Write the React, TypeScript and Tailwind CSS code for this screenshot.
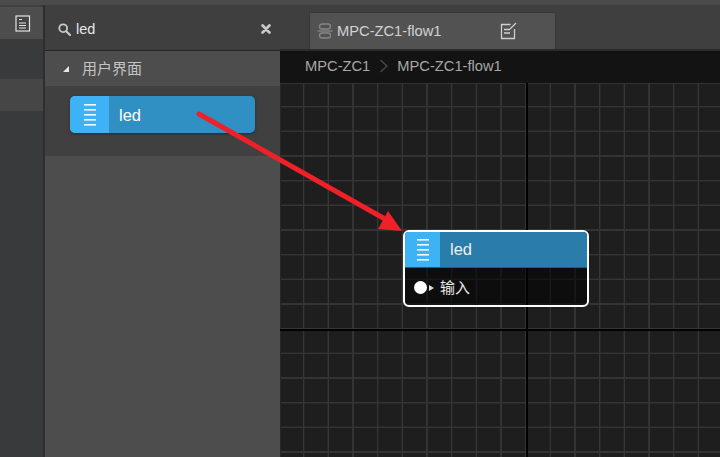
import React from "react";

function LinesIcon() {
  return (
    <svg width="14" height="24" viewBox="0 0 14 24">
      {[1, 6, 11, 16, 21].map((y) => (
        <rect key={y} x="1" y={y} width="12" height="1.6" fill="#fff" opacity="0.95" />
      ))}
    </svg>
  );
}

function DocIcon() {
  return (
    <svg width="16" height="17" viewBox="0 0 16 17">
      <rect x="1" y="1" width="13.5" height="15" fill="#444" stroke="#e4e4e4" strokeWidth="1.2" />
      <path d="M4 4.5h3M4 8h7M4 10.5h7M4 13h7" stroke="#e4e4e4" strokeWidth="1.2" />
    </svg>
  );
}

function SearchIcon() {
  return (
    <svg width="13" height="13" viewBox="0 0 13 13" fill="none">
      <circle cx="5.2" cy="5.2" r="3.9" stroke="#c8c8c8" strokeWidth="1.8" />
      <path d="M8.2 8.2L12 12" stroke="#c8c8c8" strokeWidth="2.2" strokeLinecap="round" />
    </svg>
  );
}

function CloseIcon() {
  return (
    <svg width="10" height="10" viewBox="0 0 10 10" fill="none">
      <path d="M1.6 1.6L8.4 8.4M8.4 1.6L1.6 8.4" stroke="#c8c8c8" strokeWidth="2.8" strokeLinecap="round" />
    </svg>
  );
}

function FlowIcon() {
  return (
    <svg width="16" height="16" viewBox="0 0 16 16" fill="none" stroke="#858585" strokeWidth="1.4">
      <rect x="2.5" y="1" width="11" height="5" rx="2.4" />
      <rect x="2.5" y="10" width="11" height="5" rx="2.4" />
      <path d="M0.5 8h15" />
    </svg>
  );
}

function EditIcon() {
  return (
    <svg width="17" height="18" viewBox="0 0 17 18" fill="none" stroke="#cfcfcf" strokeWidth="1.3">
      <path d="M10.5 2.5H1.5V16.5H14.5V7" />
      <path d="M4 7.5h6M4 11h6" />
      <path d="M10 7L16 1" />
    </svg>
  );
}

export default function App() {
  return (
    <div className="relative w-[720px] h-[457px] overflow-hidden flex flex-col bg-[#3f3f3f] font-['Liberation_Sans','Noto_Sans_CJK_SC',sans-serif]">
      <div className="h-[5px] shrink-0 bg-[#4b4b4b]" />
      <div className="flex flex-1 min-h-0">
        {/* Left rail */}
        <div className="w-[45px] shrink-0 flex flex-col bg-[#393a3b] border-r-2 border-[#2e2e2e]">
          <div className="h-[2px] bg-[#3f3f3f]" />
          <div className="h-[32px] bg-[#4d4d4d] flex items-center justify-end pr-[12px]">
            <DocIcon />
          </div>
          <div className="h-[40px] bg-[#393a3b]" />
          <div className="h-[32px] bg-[#464646]" />
        </div>

        {/* Palette */}
        <div className="w-[235px] shrink-0 flex flex-col bg-[#4d4d4d]">
          <div className="h-[46px] shrink-0 flex items-center pt-[4px] pl-[13px] pr-[9px] bg-[#3f3f3f] border-b border-[#232323]">
            <SearchIcon />
            <span className="ml-[5px] text-[14.5px] text-[#e6e6e6]">led</span>
            <span className="ml-auto flex -mt-[2px]"><CloseIcon /></span>
          </div>
          <div className="h-[35px] shrink-0 flex items-center pl-[18px] bg-[#4d4d4d]">
            <svg width="6" height="6" viewBox="0 0 6 6"><path d="M6 0V6H0Z" fill="#e8e8e8" /></svg>
            <span className="ml-[13px] text-[15px] leading-[20px] text-[#c4c4c4]">用户界面</span>
          </div>
          <div className="h-[70px] shrink-0 bg-[#404040] pt-[10px] pl-[25px]">
            <div className="w-[185px] h-[37px] rounded-[5px] overflow-hidden flex bg-[#3090c4] shadow-[0_1px_3px_rgba(0,0,0,0.35)]">
              <div className="w-[39px] bg-[#3db3f5] flex items-center justify-center">
                <LinesIcon />
              </div>
              <span className="ml-[10px] self-center pt-[1px] text-[16.5px] text-white">led</span>
            </div>
          </div>
        </div>

        {/* Editor */}
        <div className="flex-1 min-w-0 flex flex-col">
          <div className="h-[46px] shrink-0 pt-[7px] pl-[29px] bg-[#3f3f3f] border-b-2 border-[#2b2b2b]">
            <div className="w-[247px] h-[37px] flex items-center pl-[7px] bg-[#525252] border border-[#383838] border-b-0">
              <FlowIcon />
              <span className="ml-[4px] text-[14.7px] text-[#d2d2d2]">MPC-ZC1-flow1</span>
              <span className="ml-[59px] flex"><EditIcon /></span>
            </div>
          </div>
          <div className="h-[32px] shrink-0 flex items-center pl-[25px] pb-[2px] bg-[#131313] text-[14.7px] text-[#a8a8a8]">
            <span>MPC-ZC1</span>
            <svg width="10" height="14" viewBox="0 0 10 14" fill="none" className="mx-[8.5px]">
              <path d="M1.5 1L8 7L1.5 13" stroke="#4d4d4d" strokeWidth="1.2" />
            </svg>
            <span>MPC-ZC1-flow1</span>
          </div>
          <div className="relative flex-1 min-h-0 bg-[#1e1e1e] bg-[repeating-linear-gradient(to_right,transparent_0,transparent_22.6px,#353535_23.2px,#353535_24.1px,transparent_24.67px),repeating-linear-gradient(to_bottom,transparent_0,transparent_22.6px,#353535_23.2px,#353535_24.1px,transparent_24.67px)] shadow-[inset_0_1px_0_#333,inset_1px_0_0_#262626]">
            <div className="absolute left-[245.5px] top-0 bottom-0 w-[2px] bg-black" />
            <div className="absolute left-0 right-0 top-[246px] h-[2px] bg-black" />
            {/* Node */}
            <div className="absolute left-[123px] top-[147px] w-[186px] h-[77px] rounded-[6px] border-2 border-white overflow-hidden bg-[rgba(0,0,0,0.55)] flex flex-col">
              <div className="h-[35px] shrink-0 flex bg-[#2a7cab]">
                <div className="w-[35px] flex items-center justify-center bg-[#3db3f5]">
                  <LinesIcon />
                </div>
                <span className="ml-[10px] self-center text-[16.5px] text-[#f0f0f0]">led</span>
              </div>
              <div className="flex-1 flex items-center pl-[9px] pt-[2px] border-t border-[#1d5d83]">
                <span className="w-[13px] h-[13px] rounded-full bg-white blur-[0.4px]" />
                <svg width="5" height="6" viewBox="0 0 5 6" className="ml-[2px]"><path d="M0 0L5 3L0 6Z" fill="#ddd" /></svg>
                <span className="ml-[6px] text-[15px] leading-[20px] text-[#e8e8e8]">输入</span>
              </div>
            </div>
          </div>
        </div>
      </div>

      {/* Annotation arrow */}
      <svg width="720" height="457" viewBox="0 0 720 457" className="absolute left-0 top-0 pointer-events-none">
        <path d="M199 114L385 219" stroke="#ee2028" strokeWidth="5" strokeLinecap="round" />
        <path d="M402 231L378 229L388 211Z" fill="#ee2028" />
      </svg>
    </div>
  );
}
